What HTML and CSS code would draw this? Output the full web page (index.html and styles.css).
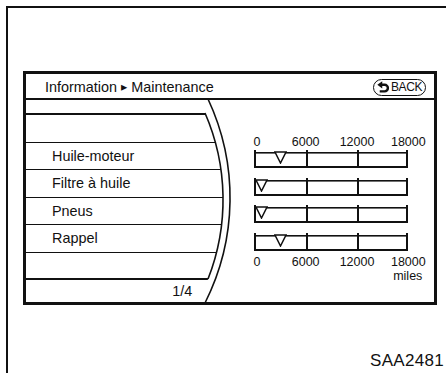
FILE: index.html
```html
<!DOCTYPE html>
<html lang="fr">
<head>
  <meta charset="UTF-8" />
  <title>Information - Maintenance</title>
  <link rel="stylesheet" href="styles.css">
</head>
<body>
  <div class="figure">
    <div class="screen">
      <div class="header">
        <span class="crumb">Information <span class="sep">▸</span> Maintenance</span>
        <span class="back">
          <svg class="back-icon" width="12" height="12" viewBox="0 0 11 11">
            <path d="M4 3.5 H7 A3 3 0 0 1 7 9.5 H2.5" fill="none" stroke="#111" stroke-width="2.2"/>
            <polygon points="0.3,3.5 4.8,0.2 4.8,6.8" fill="#111"/>
          </svg>BACK
        </span>
      </div>

      <div class="body">
        <div class="list">
          <div class="list-top"></div>
          <div class="row"></div>
          <div class="row">Huile-moteur</div>
          <div class="row">Filtre à huile</div>
          <div class="row">Pneus</div>
          <div class="row">Rappel</div>
          <div class="row last"></div>
          <div class="pager">1/4</div>
          <svg class="scroll" width="40" height="202" viewBox="0 0 40 202">
            <path d="M8 11 L9 13 A217 217 0 0 1 12 179 L11 183 L40 183 L40 11 Z" fill="#fff"/>
            <path d="M9 13 A217 217 0 0 1 12 179" fill="none" stroke="#111" stroke-width="1.6"/>
            <path d="M12 -1 A233 233 0 0 1 9 203" fill="none" stroke="#111" stroke-width="1.6"/>
          </svg>
        </div>

        <div class="meters">
          <div class="scale"><span>0</span><span>6000</span><span>12000</span><span>18000</span></div>
          <div class="bar"><i></i><i></i><i></i>
            <svg class="mark" style="left:20px" width="13" height="13" viewBox="0 0 13 13"><polygon points="1,1 12,1 6.5,12" fill="#fff" stroke="#111" stroke-width="1.5"/></svg>
          </div>
          <div class="bar"><i></i><i></i><i></i>
            <svg class="mark" style="left:1px" width="13" height="13" viewBox="0 0 13 13"><polygon points="1,1 12,1 6.5,12" fill="#fff" stroke="#111" stroke-width="1.5"/></svg>
          </div>
          <div class="bar"><i></i><i></i><i></i>
            <svg class="mark" style="left:1px" width="13" height="13" viewBox="0 0 13 13"><polygon points="1,1 12,1 6.5,12" fill="#fff" stroke="#111" stroke-width="1.5"/></svg>
          </div>
          <div class="bar"><i></i><i></i><i></i>
            <svg class="mark" style="left:20px" width="13" height="13" viewBox="0 0 13 13"><polygon points="1,1 12,1 6.5,12" fill="#fff" stroke="#111" stroke-width="1.5"/></svg>
          </div>
          <div class="scale bottom"><span>0</span><span>6000</span><span>12000</span><span>18000</span></div>
          <div class="unit">miles</div>
        </div>
      </div>
    </div>

    <div class="code">SAA2481</div>
  </div>
</body>
</html>
```

FILE: styles.css
```css
html, body {
  height: 100%;
}
body {
  margin: 0;
  background: #fff;
  font-family: "Liberation Sans", Arial, sans-serif;
  color: #111;
  overflow: hidden;
}
.figure {
  margin: 6px 0 0 6px;
  border-left: 2px solid #111;
  border-top: 2px solid #111;
  height: calc(100% - 6px);
  box-sizing: border-box;
  padding: 63px 0 0 15px;
}
.screen {
  width: 408px;
  height: 228px;
  border: 3px solid #111;
  display: flex;
  flex-direction: column;
}
.header {
  height: 26px;
  box-sizing: border-box;
  border-bottom: 2px solid #111;
  display: flex;
  align-items: center;
  justify-content: space-between;
  padding: 2px 8px 0 19px;
  font-size: 14.4px;
}
.sep {
  font-family: "DejaVu Sans", sans-serif;
  font-size: 12.5px;
  position: relative;
  top: -1px;
}
.back {
  display: flex;
  align-items: center;
  gap: 2px;
  height: 15px;
  padding: 0 3px 0 3px;
  border: 1.5px solid #111;
  border-radius: 9px;
  font-size: 12px;
  letter-spacing: -0.4px;
}
.body {
  flex: 1;
  display: flex;
}
.list {
  position: relative;
  width: 208px;
  display: flex;
  flex-direction: column;
}
.list-top {
  height: 15px;
  box-sizing: border-box;
  border-bottom: 2px solid #111;
}
.row {
  height: 27.5px;
  box-sizing: border-box;
  border-bottom: 1.5px solid #111;
  padding-left: 26px;
  font-size: 14.4px;
  display: flex;
  align-items: center;
}
.row.last {
  border-bottom-width: 2px;
}
.pager {
  flex: 1;
  padding-right: 41px;
  font-size: 14.4px;
  display: flex;
  align-items: center;
  justify-content: flex-end;
}
.scroll {
  position: absolute;
  left: 170px;
  top: 0;
  overflow: visible;
}
.meters {
  padding: 35px 0 0 21px;
  display: flex;
  flex-direction: column;
}
.scale {
  display: grid;
  grid-template-columns: repeat(4, 51.33px);
  margin-left: -25.67px;
  font-size: 12.5px;
  line-height: 14px;
  text-align: center;
  margin-bottom: 1px;
}
.scale span:first-child {
  padding-left: 5px;
}
.scale.bottom {
  margin: 4px 0 0 -25.67px;
}
.bar {
  position: relative;
  width: 154px;
  height: 18px;
  box-sizing: border-box;
  border-bottom: 2px solid #111;
  background: linear-gradient(#111, #111) 0 2px / 100% 1.6px no-repeat;
  display: grid;
  grid-template-columns: repeat(3, 1fr);
  margin-bottom: 9.5px;
}
.bar:nth-of-type(5) {
  margin-bottom: 0;
}
.bar i {
  border-left: 2px solid #111;
}
.bar i:last-of-type {
  border-right: 2px solid #111;
}
.mark {
  position: absolute;
  top: 1px;
}
.unit {
  width: 168px;
  text-align: right;
  font-size: 12.5px;
  line-height: 14px;
}
.code {
  width: 421px;
  text-align: right;
  margin-top: 46px;
  font-size: 17px;
  line-height: 20px;
  letter-spacing: 0.3px;
}
```
